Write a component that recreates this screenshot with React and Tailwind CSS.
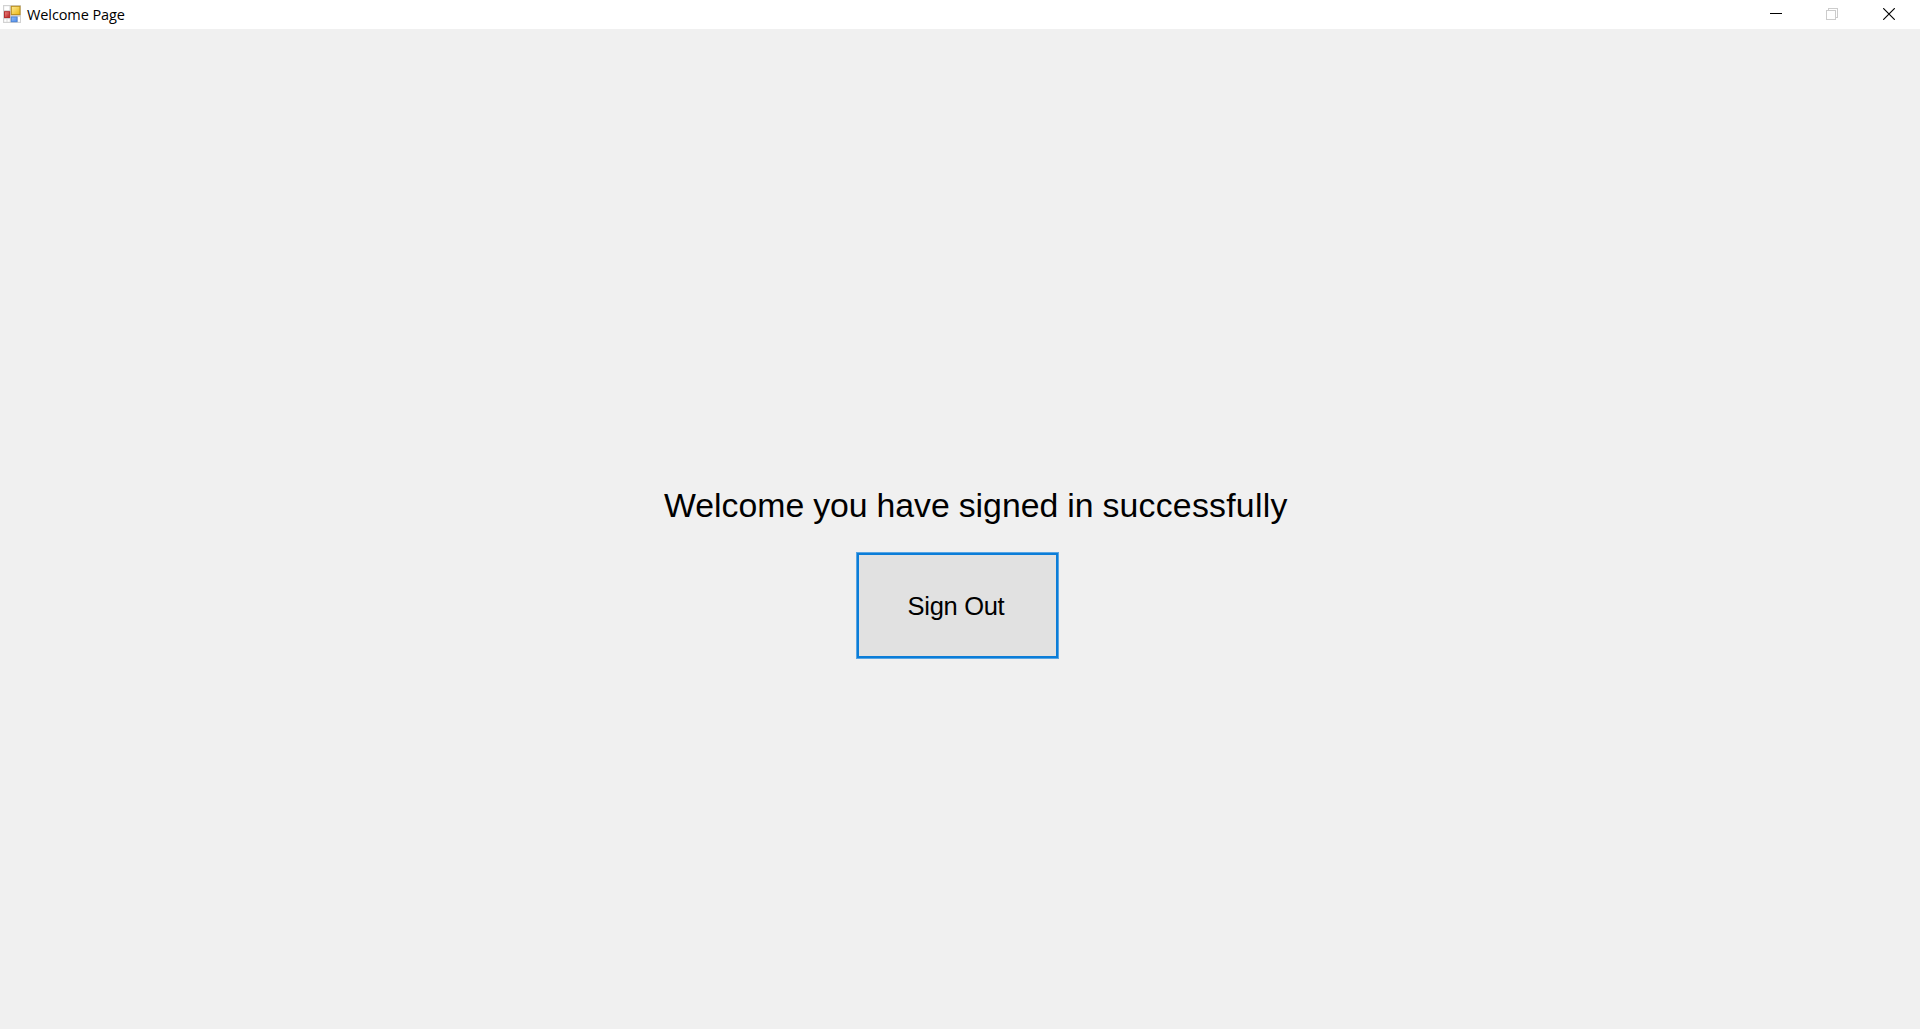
function AppIcon() {
  return (
    <svg width="18" height="18" viewBox="0 0 18 18" aria-hidden="true">
      <defs>
        <linearGradient id="gold" x1="0" y1="0" x2="1" y2="1">
          <stop offset="0" stopColor="#ffeb98" />
          <stop offset="1" stopColor="#e8b60f" />
        </linearGradient>
        <linearGradient id="red" x1="0" y1="0" x2="1" y2="1">
          <stop offset="0" stopColor="#ee8a86" />
          <stop offset="1" stopColor="#b81f20" />
        </linearGradient>
        <linearGradient id="blue" x1="0" y1="0" x2="1" y2="1">
          <stop offset="0" stopColor="#90bdfa" />
          <stop offset="1" stopColor="#4d8ae8" />
        </linearGradient>
      </defs>
      <rect width="18" height="18" fill="#d2d2d2" />
      <rect x="1.2" y="1.2" width="5.3" height="4" fill="#fff" />
      <rect x="1.2" y="14.2" width="2.4" height="2.6" fill="#fff" />
      <rect x="4.4" y="14.2" width="2.4" height="2.6" fill="#fff" />
      <rect x="15" y="11.8" width="2" height="5" fill="#fff" />
      <rect x="8.3" y="1.3" width="8.7" height="8.3" fill="url(#gold)" stroke="#b98c18" />
      <rect x="1.5" y="6.7" width="5.1" height="5.8" fill="url(#red)" stroke="#b33030" />
      <rect x="8.3" y="12" width="5.7" height="4.7" fill="url(#blue)" stroke="#4a84d8" />
    </svg>
  );
}

function TitleBar() {
  return (
    <header className="flex h-[29px] shrink-0 items-start justify-between bg-white">
      <div className="flex pl-[3px]">
        <div className="pt-[5px]">
          <AppIcon />
        </div>
        <span className="ml-[6px] mt-[5px] whitespace-nowrap font-['Open_Sans',sans-serif] text-[14.5px] leading-[20px] tracking-[-0.1px] text-black">
          Welcome Page
        </span>
      </div>
      <div className="flex gap-[44px] pr-[25px] pt-[8px]">
        <button aria-label="Minimize" className="h-3 w-3">
          <svg width="12" height="12" shapeRendering="crispEdges">
            <path d="M0 5.5H12" stroke="#000" />
          </svg>
        </button>
        <button aria-label="Restore" className="h-3 w-3" disabled>
          <svg width="12" height="12" fill="none" stroke="#ccc" shapeRendering="crispEdges">
            <path d="M.5 2.5H9.5V11.5H.5ZM2.5 2.5V.5H11.5V9.5H9.5" />
          </svg>
        </button>
        <button aria-label="Close" className="ml-px h-3 w-3">
          <svg width="12" height="12" stroke="#000" strokeWidth="1.15">
            <path d="M.2.2L11.8 11.8M11.8.2L.2 11.8" />
          </svg>
        </button>
      </div>
    </header>
  );
}

export default function App() {
  return (
    <div className="flex h-screen flex-col overflow-hidden bg-[#f0f0f0] font-['Liberation_Sans',Arial,sans-serif] text-black">
      <TitleBar />
      <main className="flex grow flex-col items-start pt-[456px]">
        <h1 className="ml-[664px] whitespace-nowrap text-[33.8px] leading-[40px] [word-spacing:-0.5px]">
          Welcome you have signed in <span className="tracking-[0.25px]">successfully</span>
        </h1>
        <button className="ml-[856px] mt-[27px] h-[107px] w-[203px] border border-[#58a5e3] bg-[#e1e1e1]">
          <span className="flex h-full w-full items-center justify-center border-2 border-[#0b7dd8] pr-[3px] pt-px text-[25.5px] tracking-[-0.3px]">
            Sign Out
          </span>
        </button>
      </main>
    </div>
  );
}
